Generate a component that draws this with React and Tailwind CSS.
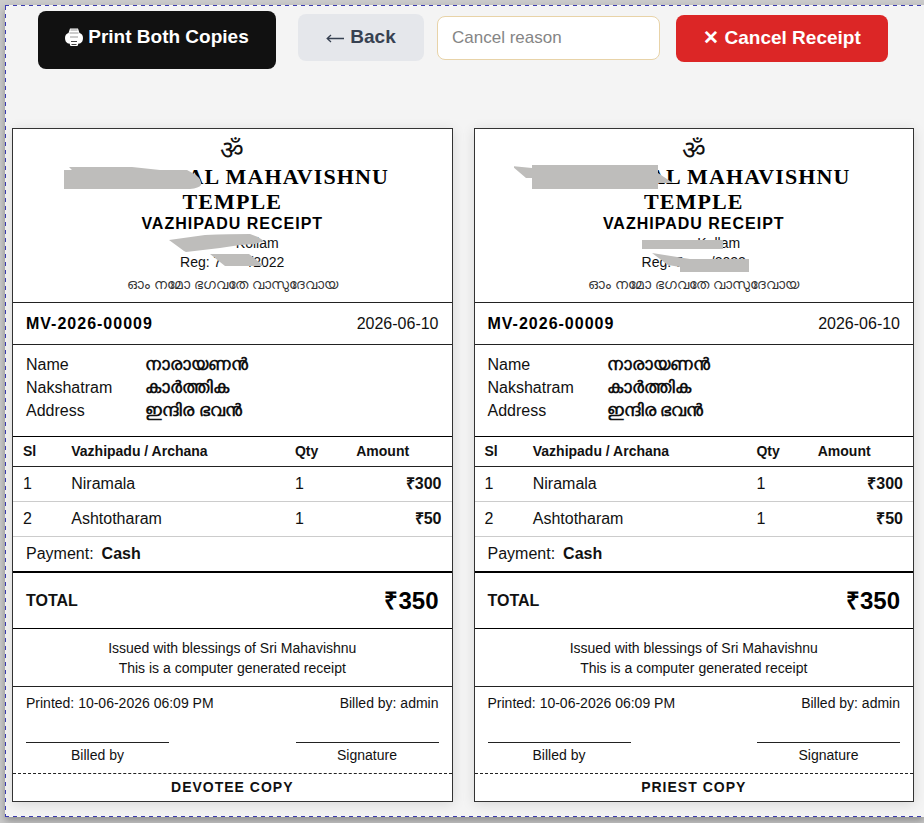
import { useState } from "react";

const bookings = [
  { name: "Niramala", qty: 1, amount: "₹300" },
  { name: "Ashtotharam", qty: 1, amount: "₹50" },
];

const devotee = [
  { label: "Name", value: "നാരായണൻ" },
  { label: "Nakshatram", value: "കാർത്തിക" },
  { label: "Address", value: "ഇന്ദിര ഭവൻ" },
];

function PrinterIcon() {
  return (
    <svg className="h-[18px] w-[18px]" viewBox="0 0 18 18" aria-hidden="true">
      <path
        d="M5 0.5 H13 L14.5 5 Q18 6 18 10 Q18 14 15 15.5 H13.5 L12.5 18 H5.5 L4.5 15.5 H3 Q0 14 0 10 Q0 6 3.5 5 Z"
        fill="#fff"
      />
      <path
        d="M5.5 2 H12.5 M4.5 5 H13.5 M5 9 H13"
        stroke="#999"
        strokeWidth="1"
        fill="none"
      />
      <path
        d="M6 13.5 H12 M6.5 16.5 H11.5"
        stroke="#444"
        strokeWidth="1"
        fill="none"
      />
    </svg>
  );
}

function BackArrow() {
  return (
    <svg
      className="h-[10px] w-[18px]"
      viewBox="0 0 18 10"
      fill="none"
      stroke="currentColor"
      strokeWidth="1.3"
      aria-hidden="true"
    >
      <path d="M18 5.5 H1.5 M5 2 L1.2 5.5 L5 9" />
    </svg>
  );
}

function DevoteeMask() {
  return (
    <svg
      className="pointer-events-none absolute left-1/2 top-0 h-[160px] w-[360px] -translate-x-1/2"
      viewBox="52 129 360 160"
      fill="#bebdbb"
      aria-hidden="true"
    >
      <path d="M64 170 H72 L69 167 H132 L160 170 H187 L196 175 Q202 180 201 185 Q199 188 190 189 H64 Z" />
      <path d="M169 240 L205 235 Q230 234 250 234 L258 237 L264 241 L255 244 L240 245 L220 248 L186 252 L184 251 Z" />
      <path d="M210 254 H249 L264 266 H225 Z" />
    </svg>
  );
}

function PriestMask() {
  return (
    <svg
      className="pointer-events-none absolute left-1/2 top-0 h-[160px] w-[360px] -translate-x-1/2"
      viewBox="514 129 360 160"
      fill="#bebdbb"
      aria-hidden="true"
    >
      <path d="M512 166 L532 168 V165 H658 V173 L673 183 H658 V189 H532 V178 H526 Z" />
      <path d="M642 240 H723 V249 H642 Z" />
      <path d="M652 253 L690 259 H749 V272 H680 V267 L668 265 Z" />
    </svg>
  );
}

function Receipt({ copy, mask }) {
  return (
    <article className="border border-[#333] bg-white text-[#111] shadow-[0_2px_12px_rgba(0,0,0,0.12)]">
      <header className="relative border-b border-[#222] px-3 pb-[9px] pt-2 text-center">
        <div className="text-[26px] leading-[27px]">ॐ</div>
        <h1 className="font-[Georgia,'Liberation_Serif',serif] text-[22px] font-bold leading-[25px] tracking-wider text-black">
          <span className="inline-block w-[112px]" />
          AL MAHAVISHNU
          <br />
          TEMPLE
        </h1>
        <h2 className="text-base font-bold leading-[20px] tracking-[1px] text-black">
          VAZHIPADU RECEIPT
        </h2>
        <p className="text-sm leading-[19px]">
          <span className="inline-block w-[50px]" />
          Kollam
        </p>
        <p className="text-sm leading-[19px]">
          Reg: 7<span className="inline-block w-[28px]" />
          /2022
        </p>
        <p className="pt-[3px] text-sm leading-[18px] text-[#333]">
          ഓം നമോ ഭഗവതേ വാസുദേവായ
        </p>
        {mask}
      </header>

      <div className="flex justify-between border-b border-[#222] px-[13px] py-2">
        <strong className="text-base leading-[25px] tracking-[1px] text-black">
          MV-2026-00009
        </strong>
        <span className="text-base leading-[25px]">2026-06-10</span>
      </div>

      <dl className="border-b border-black px-[13px] pb-[14px] pt-2">
        {devotee.map((row) => (
          <div key={row.label} className="flex h-[23px] items-center text-base">
            <dt className="w-[119px]">{row.label}</dt>
            <dd className="text-[17px] font-bold">{row.value}</dd>
          </div>
        ))}
      </dl>

      <table className="w-full table-fixed border-collapse text-left">
        <colgroup>
          <col className="w-[11%]" />
          <col className="w-[51%]" />
          <col className="w-[14%]" />
          <col className="w-[24%]" />
        </colgroup>
        <thead>
          <tr className="h-[29px] border-b border-[#222] text-sm">
            <th className="px-[10px] font-bold">Sl</th>
            <th className="px-[10px] font-bold">Vazhipadu / Archana</th>
            <th className="px-[10px] font-bold">Qty</th>
            <th className="px-[10px] font-bold">Amount</th>
          </tr>
        </thead>
        <tbody>
          {bookings.map((item, i) => (
            <tr
              key={item.name}
              className="h-[35px] border-b border-[#ccc] text-base"
            >
              <td className="px-[10px]">{i + 1}</td>
              <td className="px-[10px]">{item.name}</td>
              <td className="px-[10px]">{item.qty}</td>
              <td className="px-[10px] text-right font-bold">{item.amount}</td>
            </tr>
          ))}
        </tbody>
      </table>

      <div className="flex h-[34px] items-center gap-2 px-[13px] text-base">
        <span>Payment:</span>
        <strong>Cash</strong>
      </div>

      <div className="flex items-center justify-between border-b border-t-2 border-black px-[13px] pb-[11px] pt-3">
        <strong className="text-base">TOTAL</strong>
        <strong className="text-2xl text-black">₹350</strong>
      </div>

      <div className="border-b border-[#222] pb-2 pt-[9px] text-center text-sm leading-[20px]">
        <p>Issued with blessings of Sri Mahavishnu</p>
        <p>This is a computer generated receipt</p>
      </div>

      <div className="flex justify-between px-[13px] pt-[6px] text-sm leading-[20px]">
        <span>Printed: 10-06-2026 06:09 PM</span>
        <span>Billed by: admin</span>
      </div>

      <div className="flex justify-between px-[13px] pb-2 pt-[29px] text-center text-sm">
        <div className="w-[143px] border-t border-[#222] pt-[2px]">
          Billed by
        </div>
        <div className="w-[143px] border-t border-[#222] pt-[2px]">
          Signature
        </div>
      </div>

      <footer className="border-t border-dashed border-[#222] text-center text-sm font-bold leading-[27px] tracking-[1px]">
        {copy}
      </footer>
    </article>
  );
}

export default function App() {
  const [reason, setReason] = useState("");

  return (
    <div className="min-h-screen bg-[#cbcbcb] pl-[5px] pt-[5px] font-['Liberation_Sans',Arial,sans-serif]">
      <main className="bg-[#f4f4f4] shadow-[0_4px_8px_rgba(0,0,0,0.3)]">
        <div className="h-px bg-[repeating-linear-gradient(90deg,#3c3cb0_0_4px,#f4f4f4_4px_8px)]" />
        <div className="flex">
          <div className="w-px bg-[repeating-linear-gradient(180deg,#3c3cb0_0_4px,#f4f4f4_4px_8px)]" />
          <div className="flex-1 pb-[14px] pl-[6px] pr-[10px]">
            <div className="flex h-[122px] items-start pl-[26px] pt-[5px]">
              <button
                type="button"
                className="flex h-[58px] w-[238px] items-center justify-center gap-[5px] rounded-lg bg-[#111] pb-[6px] text-[19px] font-bold text-white"
              >
                <PrinterIcon />
                Print Both Copies
              </button>
              <button
                type="button"
                className="ml-[22px] mt-[3px] flex h-[47px] w-[126px] items-center justify-center gap-[6px] rounded-lg bg-[#e5e7eb] text-[19px] font-bold text-[#374151]"
              >
                <BackArrow />
                Back
              </button>
              <input
                type="text"
                aria-label="Cancel reason"
                placeholder="Cancel reason"
                value={reason}
                onChange={(e) => setReason(e.target.value)}
                className="ml-[13px] mt-[5px] h-[44px] w-[223px] rounded-lg border border-[#e8d3a8] bg-white px-[14px] text-[17px] placeholder:text-[#858585]"
              />
              <button
                type="button"
                className="ml-4 mt-1 h-[47px] w-[212px] rounded-lg bg-[#dc2626] text-[19px] font-bold text-white"
              >
                ✕ Cancel Receipt
              </button>
            </div>

            <div className="grid grid-cols-2 gap-[21px]">
              <Receipt copy="DEVOTEE COPY" mask={<DevoteeMask />} />
              <Receipt copy="PRIEST COPY" mask={<PriestMask />} />
            </div>
          </div>
        </div>
        <div className="h-px bg-[repeating-linear-gradient(90deg,#3c3cb0_0_4px,#f4f4f4_4px_8px)]" />
      </main>
    </div>
  );
}
